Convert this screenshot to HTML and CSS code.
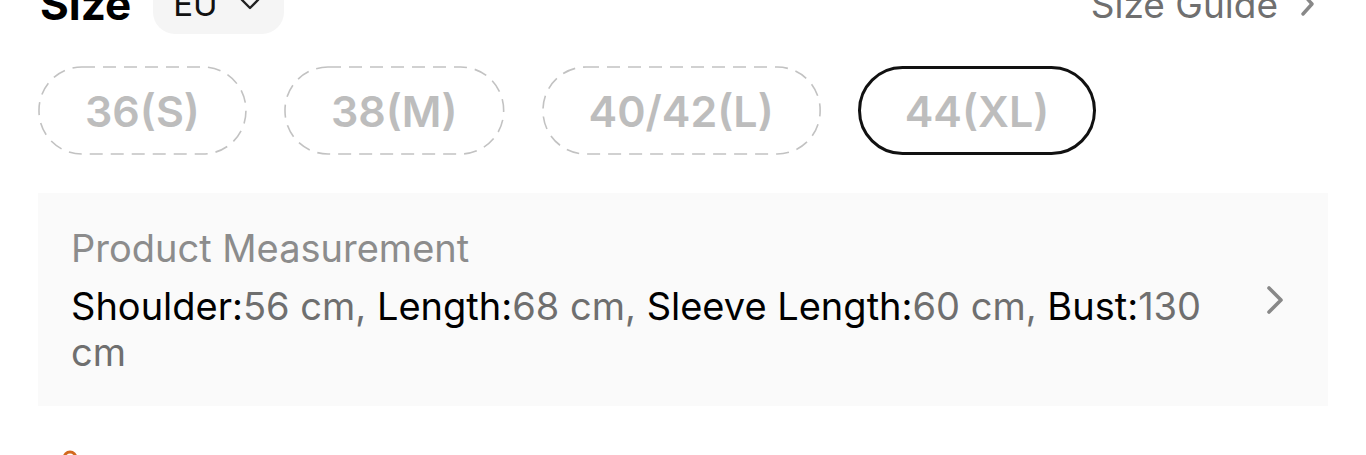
FILE: index.html
```html
<!DOCTYPE html>
<html lang="en">
<head>
    <meta charset="UTF-8">
    <meta name="viewport" content="width=device-width, initial-scale=1.0">
    <title>Size</title>
    <link rel="stylesheet" href="styles.css">
</head>
<body>
    <div id="size-section">
        <div class="size-header">
            <div class="size-title-group">
                <h2 class="size-title">Size</h2>
                <div class="unit-pill">
                    <span>EU</span>
                    <svg class="chevron-down" viewBox="0 0 20 12" width="20" height="12">
                        <path d="M2 2 L10 10 L18 2" fill="none" stroke="#222" stroke-width="2.4" stroke-linecap="round" stroke-linejoin="round"/>
                    </svg>
                </div>
            </div>
            <div class="size-guide">
                <span>Size Guide</span>
                <svg class="chevron-right" viewBox="0 0 14 24" width="14" height="24">
                    <path d="M3 2 L12 12 L3 22" fill="none" stroke="#888" stroke-width="3.4" stroke-linecap="round" stroke-linejoin="round"/>
                </svg>
            </div>
        </div>

        <div class="size-options">
            <div class="size-chip">
                <svg class="chip-border"><rect/></svg>
                36(S)
            </div>
            <div class="size-chip">
                <svg class="chip-border"><rect/></svg>
                38(M)
            </div>
            <div class="size-chip">
                <svg class="chip-border"><rect/></svg>
                40/42(L)
            </div>
            <div class="size-chip selected">44(XL)</div>
        </div>

        <div class="measure-box">
            <div class="measure-text">
                <p class="measure-label">Product Measurement</p>
                <p class="measure-values"><span class="key">Shoulder:</span>56 cm, <span class="key">Length:</span>68 cm, <span class="key">Sleeve Length:</span>60 cm, <span class="key">Bust:</span>130 cm</p>
            </div>
            <svg class="measure-arrow" viewBox="0 0 18 30" width="18" height="30">
                <path d="M3 3 L15 15 L3 27" fill="none" stroke="#888" stroke-width="3.6" stroke-linecap="round" stroke-linejoin="round"/>
            </svg>
        </div>

        <div class="next-section">
            <svg class="next-icon" viewBox="0 0 20 20" width="20" height="20">
                <circle cx="10" cy="10" r="6" fill="none" stroke="#d2691e" stroke-width="3"/>
            </svg>
        </div>
    </div>
</body>
</html>
```

FILE: styles.css
```css
body {
    margin: 0;
    background: #ffffff;
    font-family: Inter, "Noto Sans", Arial, sans-serif;
    overflow: hidden;
}

#size-section {
    padding: 0 38px;
    margin-top: -26px;
}

.size-header {
    display: flex;
    justify-content: space-between;
    align-items: center;
    height: 60px;
}

.size-title-group {
    display: flex;
    align-items: center;
    gap: 22px;
}

.size-title {
    margin: 0 0 0 2px;
    font-size: 44px;
    font-weight: 700;
    color: #000;
    line-height: 60px;
}

.unit-pill {
    display: flex;
    align-items: center;
    gap: 22px;
    height: 60px;
    padding: 0 24px 0 20px;
    background: #f5f5f5;
    border-radius: 22px;
    font-size: 33px;
    color: #111;
}

.size-guide {
    display: flex;
    align-items: center;
    gap: 22px;
    font-size: 37px;
    color: #6f6f6f;
    padding-right: 14px;
}

.size-options {
    display: flex;
    gap: 37px;
    margin-top: 32px;
}

.size-chip {
    position: relative;
    height: 89px;
    box-sizing: border-box;
    padding: 0 47px;
    display: flex;
    align-items: center;
    border-radius: 45px;
    font-size: 43px;
    font-weight: 600;
    color: #bdbdbd;
}

.chip-border {
    position: absolute;
    left: 0;
    top: 0;
    width: 100%;
    height: 100%;
    overflow: visible;
}

.chip-border rect {
    x: 1px;
    y: 1px;
    width: calc(100% - 2px);
    height: calc(100% - 2px);
    rx: 43px;
    ry: 43px;
    fill: none;
    stroke: #c2c2c2;
    stroke-width: 1.6px;
    stroke-dasharray: 13px 8px;
}

.size-chip.selected {
    border: 3px solid #111;
    padding: 0 44px;
}

.measure-box {
    display: flex;
    align-items: center;
    margin-top: 38px;
    background: #fafafa;
    padding: 0 44px 0 33px;
    height: 213px;
    box-sizing: border-box;
}

.measure-text {
    flex: 1;
    padding-right: 40px;
}

.measure-label {
    margin: 0 0 12px 0;
    font-size: 38px;
    line-height: 46px;
    color: #8c8c8c;
}

.measure-values {
    margin: 0;
    font-size: 38px;
    line-height: 46px;
    color: #6f6f6f;
}

.measure-values .key {
    color: #000;
}

.next-section {
    padding: 42px 0 0 22px;
}
```
